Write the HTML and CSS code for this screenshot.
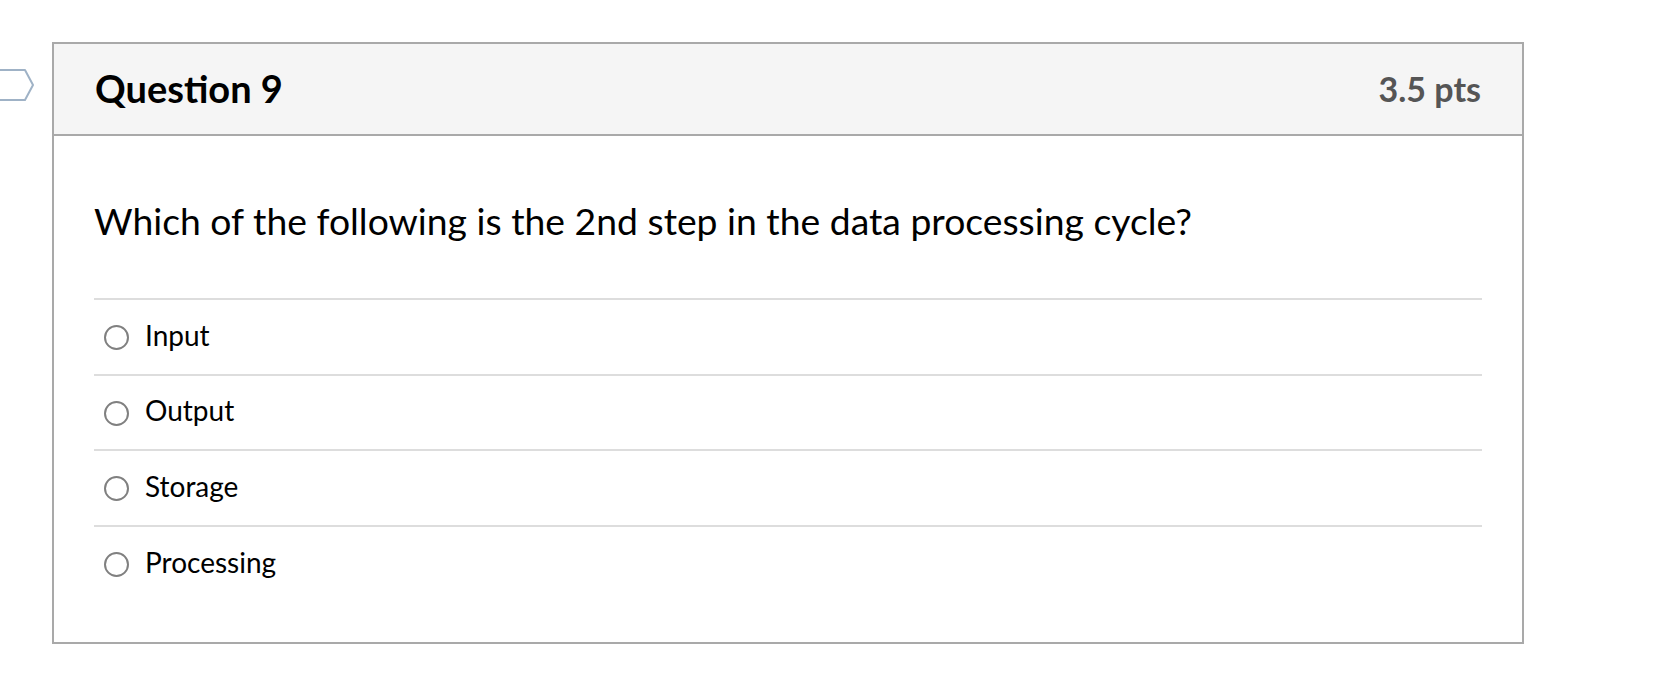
FILE: index.html
```html
<!DOCTYPE html>
<html lang="en">
<head>
<meta charset="utf-8">
<title>Question 9</title>
<link rel="stylesheet" href="styles.css">
</head>
<body>
<div class="page">
  <div class="flag-col">
    <svg class="flag" width="40" height="34" viewBox="0 0 40 34" aria-hidden="true">
      <path d="M -4 1 H 25 L 33 16 L 25 31 H -4" fill="#ffffff" stroke="#9fb2c6" stroke-width="2" stroke-linejoin="round"/>
    </svg>
  </div>
  <div class="question">
    <div class="q-header">
      <span class="q-name">Question 9</span>
      <span class="q-points">3.5 pts</span>
    </div>
    <div class="q-body">
      <div class="q-text">Which of the following is the 2nd step in the data processing cycle?</div>
      <div class="answers">
        <label class="answer"><span class="radio"></span><span class="answer-text">Input</span></label>
        <label class="answer"><span class="radio"></span><span class="answer-text">Output</span></label>
        <label class="answer"><span class="radio"></span><span class="answer-text">Storage</span></label>
        <label class="answer"><span class="radio"></span><span class="answer-text">Processing</span></label>
      </div>
    </div>
  </div>
</div>
</body>
</html>
```
FILE: styles.css
```css
html, body {
  margin: 0;
  padding: 0;
  background: #ffffff;
}
body {
  font-family: "Lato", "Noto Sans", sans-serif;
  color: #000000;
}
.page {
  display: flex;
  align-items: flex-start;
  padding-top: 42px;
}
.flag-col {
  width: 52px;
  flex: 0 0 52px;
  padding-top: 27px;
}
.flag {
  display: block;
}
.question {
  width: 1468px;
  border: 2px solid #a9a9a9;
}
.q-header {
  display: flex;
  justify-content: space-between;
  align-items: center;
  height: 90px;
  padding: 0 41px 0 41px;
  background: #f5f5f5;
  border-bottom: 2px solid #a9a9a9;
}
.q-name {
  font-size: 38px;
  font-weight: 700;
  line-height: 1.2;
}
.q-points {
  font-size: 34px;
  font-weight: 700;
  line-height: 1.2;
  color: #555555;
}
.q-body {
  padding: 62.5px 40px 41px 40px;
}
.q-text {
  font-size: 37.3px;
  line-height: 1.2;
  padding-bottom: 55px;
}
.answer {
  display: flex;
  align-items: center;
  border-top: 2px solid #dddddd;
  padding: 18.5px 0 21.5px 10px;
  font-size: 28px;
  line-height: 1.2;
}
.radio {
  width: 21px;
  height: 21px;
  border: 2px solid #808080;
  border-radius: 50%;
  margin-right: 16px;
  margin-top: 4px;
  flex: 0 0 auto;
}
```
